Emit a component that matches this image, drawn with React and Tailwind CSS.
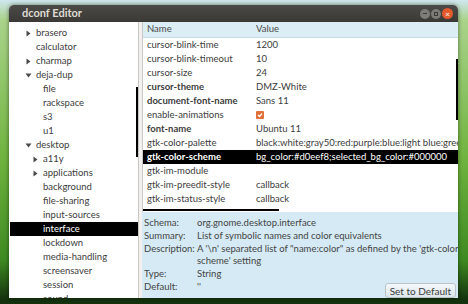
const TREE = [
  { label: "brasero", depth: 0, arrow: "right" },
  { label: "calculator", depth: 0 },
  { label: "charmap", depth: 0, arrow: "right" },
  { label: "deja-dup", depth: 0, arrow: "down" },
  { label: "file", depth: 1 },
  { label: "rackspace", depth: 1 },
  { label: "s3", depth: 1 },
  { label: "u1", depth: 1 },
  { label: "desktop", depth: 0, arrow: "down" },
  { label: "a11y", depth: 1, arrow: "right" },
  { label: "applications", depth: 1, arrow: "right" },
  { label: "background", depth: 1 },
  { label: "file-sharing", depth: 1 },
  { label: "input-sources", depth: 1 },
  { label: "interface", depth: 1, selected: true },
  { label: "lockdown", depth: 1 },
  { label: "media-handling", depth: 1 },
  { label: "screensaver", depth: 1 },
  { label: "session", depth: 1 },
  { label: "sound", depth: 1 },
];

const KEYS = [
  { name: "cursor-blink-time", value: "1200" },
  { name: "cursor-blink-timeout", value: "10" },
  { name: "cursor-size", value: "24" },
  { name: "cursor-theme", value: "DMZ-White", bold: true },
  { name: "document-font-name", value: "Sans 11", bold: true },
  { name: "enable-animations", check: true },
  { name: "font-name", value: "Ubuntu 11", bold: true },
  {
    name: "gtk-color-palette",
    value:
      "black:white:gray50:red:purple:blue:light blue:green:yellow:orange:lavender:brown:goldenrod4:dodger blue:pink:light green:gray10:gray30:gray75:gray90",
  },
  { name: "gtk-color-scheme", value: "bg_color:#d0eef8;selected_bg_color:#000000", bold: true, selected: true },
  { name: "gtk-im-module", value: "" },
  { name: "gtk-im-preedit-style", value: "callback" },
  { name: "gtk-im-status-style", value: "callback" },
];

function Arrow({ dir }) {
  // small filled triangles, like the gtk expanders
  if (dir === "down") {
    return (
      <svg width="7" height="7" viewBox="0 0 7 7" className="shrink-0">
        <path d="M0.5 1.5 L6.5 1.5 L3.5 5.5 Z" fill="#4a4a4a" />
      </svg>
    );
  }
  return (
    <svg width="7" height="7" viewBox="0 0 7 7" className="shrink-0">
      <path d="M1.5 0.5 L5.5 3.5 L1.5 6.5 Z" fill="#4a4a4a" />
    </svg>
  );
}

function TreeRow({ item }) {
  const pad = item.depth === 0 ? "pl-[15px]" : "pl-[22px]";
  return (
    <div
      className={`flex h-[14px] items-center gap-[4px] ${pad} ${
        item.selected ? "bg-black text-white" : "text-[#3c3c3c]"
      }`}
    >
      <span className="flex w-[7px] justify-center">{item.arrow && <Arrow dir={item.arrow} />}</span>
      <span className="leading-none">{item.label}</span>
    </div>
  );
}

function KeyRow({ row }) {
  return (
    <div
      className={`flex h-[14px] items-center whitespace-nowrap ${
        row.selected ? "bg-black text-white" : "text-[#3c3c3c]"
      }`}
    >
      <span className={`w-[113px] shrink-0 pl-[4px] ${row.bold ? "font-bold" : ""}`}>{row.name}</span>
      <span className="min-w-0 flex-1 overflow-hidden">
        {row.check ? (
          <span className="flex h-[8px] w-[8px] items-center justify-center rounded-[1px] bg-[#e2703a]">
            <svg width="6" height="6" viewBox="0 0 6 6">
              <path d="M1 3 L2.5 4.5 L5 1.5" stroke="white" strokeWidth="1.2" fill="none" />
            </svg>
          </span>
        ) : (
          row.value
        )}
      </span>
    </div>
  );
}

function InfoRow({ label, children }) {
  return (
    <div className="flex leading-[12px]">
      <span className="w-[53px] shrink-0">{label}</span>
      <span className="flex-1 whitespace-nowrap">{children}</span>
    </div>
  );
}

export default function App() {
  return (
    <div
      className="relative h-[304px] w-[468px] overflow-hidden bg-[linear-gradient(180deg,#cfe6ef_0px,#a9d38a_20px,#6fb33e_160px,#3e8a22_260px,#14320e_300px)] pl-[9px] pt-[5px] text-[9.5px]"
      style={{ fontFamily: 'Lato, "Open Sans", sans-serif' }}
    >
      <div className="flex h-[293px] w-[449px] flex-col overflow-hidden rounded-t-[5px] bg-[#f2f1f0] shadow-[0_0_4px_rgba(0,0,0,0.5)]">
        {/* title bar */}
        <div className="flex h-[17px] shrink-0 items-center justify-between bg-[linear-gradient(180deg,#4b4a46,#3a3935)] pl-[13px] pr-[5px]">
          <span className="text-[11px] font-bold text-[#dfdbd2]">dconf Editor</span>
          <div className="flex items-center gap-[1px]">
            <span className="flex h-[10px] w-[10px] items-center justify-center rounded-full bg-[#7d7c77]">
              <span className="h-[1px] w-[4px] bg-[#3b3a36]" />
            </span>
            <span className="flex h-[10px] w-[10px] items-center justify-center rounded-full bg-[#7d7c77]">
              <span className="h-[4px] w-[4px] border border-[#3b3a36]" />
            </span>
            <span className="flex h-[11px] w-[11px] items-center justify-center rounded-full bg-[#e45a2c] text-[8px] font-bold leading-none text-[#fbe4d9]">
              ×
            </span>
          </div>
        </div>

        {/* body */}
        <div className="flex min-h-0 flex-1">
          {/* left tree */}
          <div className="relative w-[130px] shrink-0 overflow-hidden border-r border-[#c9c7c3] bg-white pl-[1px] pt-[4px]">
            {TREE.map((item) => (
              <TreeRow key={item.label} item={item} />
            ))}
            <span className="absolute left-[127px] top-[65px] h-[70px] w-[2px] bg-black" />
          </div>

          {/* right side */}
          <div className="ml-[3px] flex min-w-0 flex-1 flex-col">
            <div className="relative h-[190px] shrink-0 overflow-hidden border-l border-[#c9c7c3] bg-white">
              <div className="flex h-[16px] items-center border-b border-[#c8dbe5] bg-[#dcedf6] text-[#4a4a4a]">
                <span className="w-[113px] pl-[4px]">Name</span>
                <span>Value</span>
              </div>
              {KEYS.map((row) => (
                <KeyRow key={row.name} row={row} />
              ))}
              <span className="absolute right-0 top-[37px] h-[61px] w-[2px] bg-black" />
              <span className="absolute bottom-[1px] left-0 h-[2px] w-[136px] bg-black" />
            </div>

            {/* info panel */}
            <div className="flex flex-1 flex-col gap-[1px] bg-[#d5eaf4] px-[2px] pt-[5px] text-[#444]">
              <InfoRow label="Schema:">org.gnome.desktop.interface</InfoRow>
              <InfoRow label="Summary:">List of symbolic names and color equivalents</InfoRow>
              <InfoRow label="Description:">
                A '\n' separated list of "name:color" as defined by the 'gtk-color-
                <br />
                scheme' setting
              </InfoRow>
              <InfoRow label="Type:">String</InfoRow>
              <div className="flex items-start justify-between">
                <div className="flex leading-[12px]">
                  <span className="w-[53px] shrink-0">Default:</span>
                  <span>''</span>
                </div>
                <button className="mt-[2px] h-[15px] rounded-[3px] border border-[#b9c4ca] bg-[linear-gradient(180deg,#f4f8fa,#dde6eb)] px-[4px] text-[10px] leading-none text-[#3c3c3c]">
                  Set to Default
                </button>
              </div>
            </div>
          </div>
        </div>
      </div>
    </div>
  );
}
